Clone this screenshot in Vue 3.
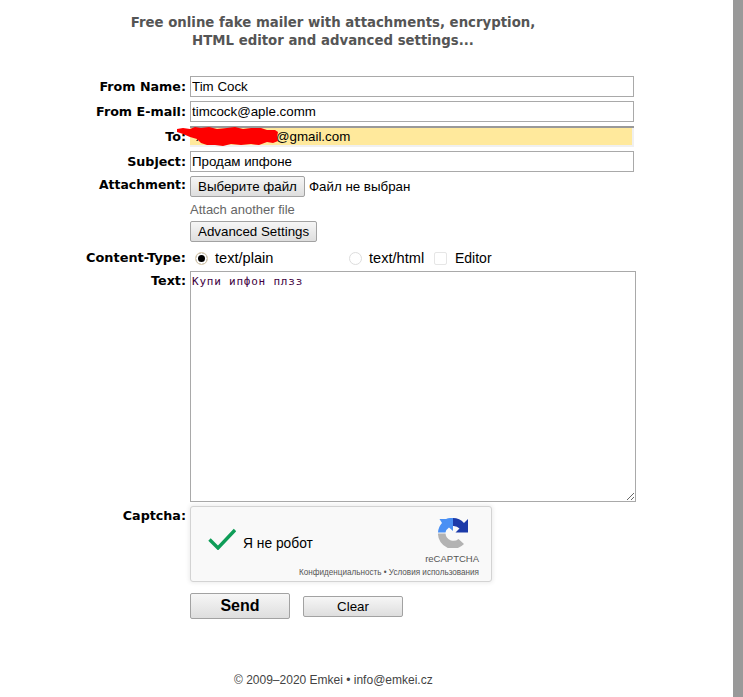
<template>
  <div class="page">
    <main class="content">
      <h1 class="title">
        Free online fake mailer with attachments, encryption,<br />
        HTML editor and advanced settings...
      </h1>

      <form class="form" @submit.prevent>
        <label class="lbl row-lbl">From Name:</label>
        <div class="field"><input class="text" value="Tim Cock" /></div>

        <label class="lbl row-lbl">From E-mail:</label>
        <div class="field"><input class="text" value="timcock@aple.comm" /></div>

        <label class="lbl row-lbl">To:</label>
        <div class="field">
          <input class="text text--auto" value="xxxxxxxxxxxx@gmail.com" />
          <svg class="scribble" width="102" height="19" viewBox="0 0 102 19">
            <path
              fill="#fe0000"
              d="M0 2 L6 1 L13 2 L18 0 L24 1 L32 0 L40 2 L50 1 L58 0 L66 2 L74 1 L84 1 L90 3 L98 3 L101 5 L100 10 L101 14 L96 16 L90 15 L82 18 L74 17 L64 18 L54 17 L46 19 L38 18 L30 18 L24 16 L20 12 L13 10 L6 7 L0 5 Z"
            />
          </svg>
        </div>

        <label class="lbl row-lbl">Subject:</label>
        <div class="field"><input class="text" value="Продам ипфоне" /></div>

        <label class="lbl lbl--file">Attachment:</label>
        <div class="file-row">
          <button type="button" class="btn">Выберите файл</button>
          <span>Файл не выбран</span>
        </div>

        <div class="side">
          <a class="attach-link">Attach another file</a>
          <button type="button" class="btn">Advanced Settings</button>
        </div>

        <label class="lbl lbl--type">Content-Type:</label>
        <div class="types">
          <span class="opt opt--plain"><i class="radio radio--on"></i>text/plain</span>
          <span class="opt opt--html"><i class="radio"></i>text/html</span>
          <span class="opt opt--editor"><i class="check"></i>Editor</span>
        </div>

        <label class="lbl lbl--text">Text:</label>
        <textarea class="body">Купи ипфон плзз</textarea>

        <label class="lbl lbl--captcha">Captcha:</label>
        <div class="captcha">
          <svg class="tick" width="28" height="22" viewBox="0 0 28 22">
            <path d="M1.5 11.5 L10 20 L27 2" fill="none" stroke="#0f9d58" stroke-width="3.4" />
          </svg>
          <span class="robot">Я не робот</span>
          <div class="brand">
            <svg width="30" height="30" viewBox="0 0 30 30">
              <path fill="#1c3aa9" d="M15 0 A15 15 0 0 1 26 5 L30 1 V14.5 H17.5 L21.5 10.5 A8 8 0 0 0 15 8 Z" />
              <path fill="#4a90f4" d="M15 0 V13 L11 9.5 A8 8 0 0 0 7.5 14.5 H0 A15 15 0 0 1 4 5 L1.5 1 H8 A15 15 0 0 1 15 0 Z" />
              <path fill="#b3b3b3" d="M0 15.5 H7.5 A8 8 0 0 0 20.5 21 L26 26 A15 15 0 0 1 0 15.5 Z" />
            </svg>
            <span class="brand-name">reCAPTCHA</span>
          </div>
          <span class="terms">Конфиденциальность • Условия использования</span>
        </div>

        <div class="actions">
          <button type="button" class="btn btn--send">Send</button>
          <button type="button" class="btn btn--clear">Clear</button>
        </div>
      </form>

      <footer class="foot">© 2009–2020 Emkei • info@emkei.cz</footer>
    </main>
    <div class="scrollbar"></div>
  </div>
</template>

<script setup>
</script>

<style>
html, body {
  margin: 0;
  background: #fff;
  overflow: hidden;
}
</style>

<style scoped>
.page {
  display: flex;
  height: 697px;
  font-family: "Liberation Sans", Arial, sans-serif;
  font-size: 13.33px;
  color: #000;
}

.content {
  width: 733px;
  flex: none;
}

.scrollbar {
  width: 10px;
  background: #999;
}

.title {
  margin: 14px 0 0;
  width: 666px;
  text-align: center;
  font-family: "DejaVu Sans", sans-serif;
  font-size: 13.3px;
  line-height: 18px;
  font-weight: bold;
  color: #555;
}

.form {
  display: grid;
  grid-template-columns: 186px 446px;
  column-gap: 4px;
  margin-top: 26px;
}

.lbl {
  text-align: right;
  font-family: "DejaVu Sans", sans-serif;
  font-size: 12.7px;
  font-weight: bold;
  line-height: 16px;
  white-space: nowrap;
}

.row-lbl {
  padding-top: 3px;
}

.lbl--file {
  padding-top: 1px;
  font-size: 12.4px;
}

.lbl--type {
  margin-top: 8px;
  font-size: 12.9px;
}

.lbl--text {
  margin-top: 7px;
}

.lbl--captcha {
  margin-top: 4px;
  padding-top: 2px;
}

.field {
  height: 25px;
  position: relative;
}

.text {
  display: block;
  box-sizing: border-box;
  width: 444px;
  height: 21px;
  padding: 0 1px;
  border: 1px solid #a9a9a9;
  background: #fff;
  font: 13.33px "Liberation Sans", Arial, sans-serif;
  color: #000;
  outline: none;
  border-radius: 0;
}

.text--auto {
  border: 0;
  border-top: 2px solid #999;
  background: #ffe99c;
  box-shadow: inset -2px -2px 0 #f0f0f0;
  padding: 0 0 2px 6px;
}

.scribble {
  position: absolute;
  left: -13px;
  top: 1px;
}

.file-row {
  height: 21px;
  display: flex;
  align-items: center;
  gap: 4px;
}

.btn {
  box-sizing: border-box;
  height: 21px;
  padding: 0 7px;
  border: 1px solid #a2a2a2;
  border-radius: 2px;
  background: linear-gradient(#f6f6f6, #dedede);
  font: 13.33px "Liberation Sans", Arial, sans-serif;
  color: #000;
}

.side {
  grid-column: 2;
  display: flex;
  flex-direction: column;
  align-items: flex-start;
}

.attach-link {
  margin-top: 5px;
  height: 19px;
  line-height: 16px;
  font-size: 13px;
  color: #666;
}

.types {
  display: flex;
  align-items: center;
  height: 16px;
  margin-top: 8px;
  padding-left: 5px;
  font-size: 14.6px;
}

.opt {
  display: flex;
  align-items: center;
}

.opt--plain {
  width: 154px;
}

.opt--html {
  width: 85px;
}

.opt--editor {
  font-size: 14px;
}

.radio,
.check {
  display: block;
  box-sizing: border-box;
  width: 13px;
  height: 13px;
  margin-right: 7px;
  background: #fff;
  border: 1px solid #ddd;
}

.radio {
  border-radius: 50%;
}

.radio--on {
  border: 1px solid #d8c8a8;
  box-shadow: inset 0 0 0 2px #fff;
  background: #000;
  background-clip: padding-box;
}

.check {
  border: 1px solid #e6e6e6;
  border-radius: 2px;
  margin-right: 8px;
}

.body {
  box-sizing: border-box;
  display: block;
  width: 446px;
  height: 231px;
  margin-top: 5px;
  padding: 3px 1px;
  border: 1px solid #a9a9a9;
  font: 11px "DejaVu Sans Mono", monospace;
  letter-spacing: 0.78px;
  color: #400040;
  outline: none;
}

.captcha {
  position: relative;
  box-sizing: border-box;
  width: 302px;
  height: 76px;
  margin-top: 4px;
  border: 1px solid #d3d3d3;
  border-radius: 3px;
  background: #f9f9f9;
  box-shadow: 0 0 4px 1px rgba(0, 0, 0, 0.08);
  display: flex;
  align-items: center;
  padding-left: 17px;
}

.tick {
  margin-top: -10px;
  flex: none;
}

.robot {
  margin-left: 7px;
  margin-top: -2px;
  font-size: 13.8px;
}

.brand {
  position: absolute;
  top: 11px;
  right: 12px;
  display: flex;
  flex-direction: column;
  align-items: center;
}

.brand svg {
  margin-right: -1px;
}

.brand-name {
  margin-top: 5px;
  font-size: 9.5px;
  line-height: 12px;
  color: #555;
}

.terms {
  position: absolute;
  right: 12px;
  bottom: 2px;
  font-size: 8.15px;
  line-height: 12px;
  color: #555;
  white-space: nowrap;
}

.actions {
  grid-column: 2;
  display: flex;
  align-items: center;
  margin-top: 11px;
  gap: 13px;
}

.btn--send {
  width: 100px;
  height: 26px;
  font-size: 16px;
  font-weight: bold;
}

.btn--clear {
  width: 100px;
}

.foot {
  margin-top: 54px;
  padding-left: 234px;
  font-size: 12px;
  line-height: 14px;
  color: #444;
}
</style>
